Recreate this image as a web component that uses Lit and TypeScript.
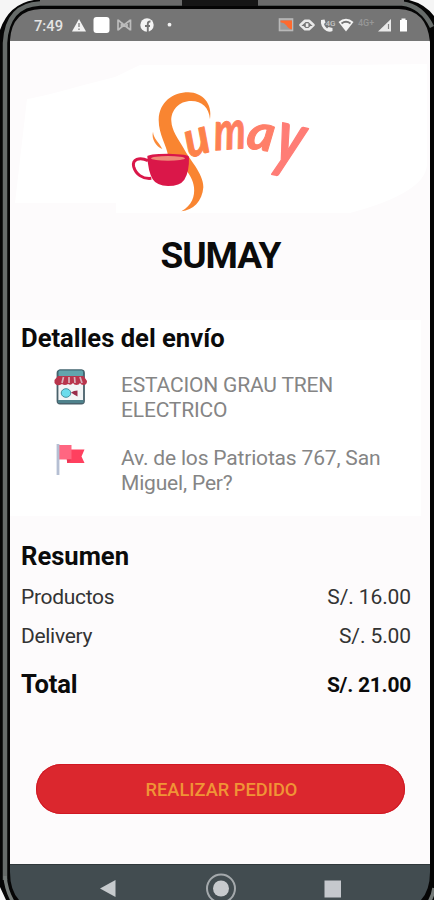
import { LitElement, html, css, svg } from "lit";
import { customElement } from "lit/decorators.js";

@customElement("status-bar")
class StatusBar extends LitElement {
  static styles = css`
    :host { display: block; height: 41px; background: #757575; }
    svg { display: block; width: 434px; height: 41px; }
    .time { font: 500 15px Roboto, sans-serif; fill: #e4e4e4; }
    .tiny { font: 500 8px Roboto, sans-serif; fill: #c4c4c4; }
    .faint { font: 500 9px Roboto, sans-serif; fill: #979797; }
  `;
  render() {
    return html`<svg viewBox="0 0 434 41">
      <text class="time" x="34" y="30.5" textLength="29" lengthAdjust="spacingAndGlyphs">7:49</text>
      <path d="M79 19 L86 31.5 H72Z" fill="#f2f2f2" />
      <path d="M79 23 V27 M79 28.5 V30" stroke="#858585" stroke-width="1.4" />
      <rect x="93.500" y="17" width="16" height="16" rx="3" fill="#fff" />
      <path d="M118 19.500 V30.500 M130.500 19.500 V30.500 M118 20 L124 25 L130.500 20 M118 30 L124 25 L130.500 30 M121.500 22 V28 M127 22 V28" fill="none" stroke="#bdbdbd" stroke-width="1.700" />
      <circle cx="147" cy="25" r="6.700" fill="#f4f4f4" />
      <path d="M147.800 32 V24 Q147.800 21.300 150.500 21.500 M145 26 H150" fill="none" stroke="#757575" stroke-width="1.900" />
      <circle cx="169.500" cy="24.700" r="1.900" fill="#f2f2f2" />
      <rect x="279.500" y="19" width="13" height="11.500" fill="#9a9a9a" stroke="#b9b9b9" stroke-width="1.600" />
      <path d="M280.500 20.500 H292 V29.500 Q288.500 29 286.500 25.500 Q284.500 22.800 280.500 22.300Z" fill="#ff6a2e" />
      <path d="M300.500 25 L305 20.800 H309 L313.500 25 L309 29.200 H305Z" fill="none" stroke="#e9e9e9" stroke-width="2.600" stroke-linejoin="round" />
      <rect x="305.800" y="23.300" width="2.600" height="3.600" fill="#efefef" />
      <path d="M321 20 Q320 27 326.500 31 Q330 32.500 332.500 31 V28 L328.500 27 L327 28.500 Q324.500 26.500 324 24 L325.500 22.500 L324.500 19.500Z" fill="#eee" />
      <text class="tiny" x="325.500" y="25.500">4G</text>
      <path d="M338.500 22 Q346 15.500 353.500 22 L346 31.500Z" fill="#f4f4f4" />
      <path d="M341.500 23.400 Q346 20.200 350.500 23.400" fill="none" stroke="#757575" stroke-width="1.900" />
      <text class="faint" x="358" y="25.500">4G+</text>
      <path d="M391 19 V31.500 H378Z" fill="#e9e9e9" />
      <path d="M388.500 24 V29" stroke="#858585" stroke-width="1.200" />
      <path d="M400 20 H401.500 V18.500 H405.500 V20 H407 V31.500 H400Z" fill="#fff" />
    </svg>`;
  }
}

@customElement("sumay-logo")
class SumayLogo extends LitElement {
  static styles = css`
    :host { display: block; width: 200px; height: 140px; }
    svg { display: block; width: 200px; height: 140px; overflow: visible; }
    .script {
      font: italic 700 150px Lato, sans-serif;
      stroke-linejoin: round;
      stroke-width: 3;
    }
  `;
  render() {
    const letters = [
      { c: "u", x: 208, y: 234, r: -17, w: 0.92, h: 1 },
      { c: "m", x: 285, y: 211, r: -4, w: 0.8, h: 1.08 },
      { c: "a", x: 376, y: 203, r: 9, w: 1.05, h: 1 },
      { c: "y", x: 456, y: 243, r: 13, w: 1.1, h: 1.55 },
    ];
    return html`<svg viewBox="0 0 600 420">
      <defs>
        <linearGradient id="warm" gradientUnits="userSpaceOnUse" x1="0" y1="0" x2="90" y2="0">
          <stop offset="0" stop-color="#fe7f50" /><stop offset="1" stop-color="#fe7f62" />
        </linearGradient>
      </defs>
      <path d="M270 118 C267 82 246 63 214 63 C176 63 153 91 154 123 C155 151 174 176 190 203 C202 226 214 240 226 259 C240 282 250 300 250 322 C247 364 219 391 184 394 C216 376 225 350 222 322 C220 300 208 284 200 272 L144 226 C140 196 116 164 116 119 C118 66 158 37 205 37 C248 38 278 71 270 118Z" fill="#f98531" />
      <path d="M99 155 C100 176 119 189 127 207 C109 200 93 177 99 155Z" fill="#fb8b39" />
      ${letters.map((l, i) => {
        const fill = ["#fd824a", "url(#warm)", "#ff7f69", "#ff7d76"][i];
        return svg`<text class="script" transform="translate(${l.x} ${l.y}) rotate(${l.r}) scale(${l.w} ${l.h})" fill=${fill} stroke=${fill}>${l.c}</text>`;
      })}
      <path d="M84 242 C57 229 36 239 41 260 C47 282 67 298 94 295" fill="none" stroke="#da1749" stroke-width="9" />
      <path d="M82 229 Q82 222 144 221 Q207 222 207 231 Q208 277 193 299 Q180 318 144 318 Q110 317 98 298 Q84 274 82 229Z" fill="#da1749" />
      <ellipse cx="144" cy="235" rx="51" ry="7" fill="#ef8b78" />
    </svg>`;
  }
}

@customElement("app-root")
class AppRoot extends LitElement {
  static styles = css`
    :host { display: block; width: 434px; height: 900px; overflow: hidden; position: relative; background: #fdfbfc; font-family: Roboto, sans-serif; color: #0b0b0b; }
    .screen { display: flex; flex-direction: column; height: 900px; }
    .hero { height: 279px; display: flex; flex-direction: column; align-items: center; position: relative; }
    .glow { position: absolute; left: 0; top: 0; width: 434px; height: 180px; }
    sumay-logo { margin-top: 39px; margin-right: -6px; position: relative; }
    h1, h2 { margin: 0; white-space: nowrap; }
    h1 { font-size: 37px; line-height: 44px; font-weight: 700; letter-spacing: -1.1px; margin: 14px 0 0 7px; }
    h2 { font-size: 25.600px; line-height: 30px; font-weight: 700; }
    .shipping { background: #fff; margin: 0 13px 0 10px; height: 196px; padding: 3px 0 0 11px; box-sizing: border-box; }
    .stop { display: flex; align-items: flex-start; color: #858585; font-size: 21px; line-height: 25px; }
    .stop svg { width: 36px; height: 38px; margin-left: 32px; margin-right: 32px; flex: none; }
    .stop p { margin: 5px 0 0; white-space: pre-line; letter-spacing: -0.180px; }
    .first { margin-top: 15px; height: 73px; }
    .summary { padding: 25px 23px 0 21px; }
    .row { display: flex; justify-content: space-between; align-items: center; font-size: 21px; line-height: 24px; color: #333; margin-top: 15px; letter-spacing: -0.300px; }
    .row span:last-child { letter-spacing: -0.100px; }
    .products { margin-top: 14px; }
    .total { color: #0b0b0b; font-weight: 700; margin-top: 19px; line-height: 30px; }
    .total h2 { letter-spacing: -0.200px; }
    .row.total span { padding-top: 3px; letter-spacing: -0.250px; }
    .action { margin: 64px 29px 0 36px; height: 50px; padding: 0 0 0 2px; border: 0; border-radius: 25px; background: #db272e; box-shadow: inset 0 0 0 1px #d01823; color: #f09436; font: 500 18.300px Roboto, sans-serif; }
    .nav { margin-top: auto; height: 36px; background: #424c50; border-top: 1px solid #30383b; box-sizing: border-box; }
    .nav svg { display: block; width: 434px; height: 35px; }
    .frame { position: absolute; left: 0; top: 0; width: 434px; height: 900px; pointer-events: none; }
  `;
  render() {
    return html`
      <div class="screen">
        <status-bar></status-bar>
        <section class="hero">
          <svg class="glow" viewBox="0 0 434 180">
            <path d="M27 58 Q45 55 80 45 L115 36 L140 24 H345 L427 23 V124 Q425 152 350 172 H116 V162 H15Z" fill="#fff" />
          </svg>
          <sumay-logo></sumay-logo>
          <h1>SUMAY</h1>
        </section>
        <section class="shipping">
          <h2>Detalles del envío</h2>
          <div class="stop first">
            <svg viewBox="0 0 36 38">
              <rect x="4.500" y="2.500" width="26.500" height="33" rx="2.500" fill="#f3f5f6" stroke="#49616b" stroke-width="1.800" />
              <rect x="5" y="2" width="25.500" height="7" rx="2" fill="#62a5ad" stroke="#3f6773" />
              <path d="M5 8 H30.500 L34 13 Q34 17 30.500 17 Q28 17 27 15 Q26 17 23.500 17 Q21 17 20 15 Q18 18 15 16 Q12 18 9 16 Q4 19 1.500 15 V12Z" fill="#b9354c" />
              <path d="M10.500 9 L9 15 M16 9 V15 M21.500 9 L22 15 M27 9 L29 15" stroke="#d8b1ba" stroke-width="1.700" />
              <path d="M5 33.500 H30.500" stroke="#4f828c" stroke-width="3" />
              <ellipse cx="13" cy="25" rx="4.800" ry="4.300" fill="#6bdcec" stroke="#438f9e" />
              <path d="M18 24.500 L21 23 L24.500 22.500 V28.500 L21 26.500Z" fill="#992c4a" />
            </svg>
            <p>ESTACION GRAU TREN
              ELECTRICO</p>
          </div>
          <div class="stop">
            <svg viewBox="0 0 36 38">
              <path d="M14 8.500 H31.500 L28.500 15.500 L31.500 22 H14Z" fill="#ff405f" />
              <path d="M6 4 H18.500 V18.500 H6Z" fill="#ff6681" />
              <path d="M13.500 18.500 H18.500 L15 22Z" fill="#e93855" />
              <path d="M5 3 V34" stroke="#b5bfd3" stroke-width="2.800" />
            </svg>
            <p>Av. de los Patriotas 767, San
              Miguel, Per?</p>
          </div>
        </section>
        <section class="summary">
          <h2>Resumen</h2>
          <div class="row products"><span>Productos</span><span>S/. 16.00</span></div>
          <div class="row"><span>Delivery</span><span>S/. 5.00</span></div>
          <div class="row total"><h2>Total</h2><span>S/. 21.00</span></div>
        </section>
        <button class="action">REALIZAR PEDIDO</button>
        <nav class="nav">
          <svg viewBox="0 0 434 35">
            <path d="M100 23.500 L115.500 15 V32Z" fill="#c6cacd" />
            <circle cx="221" cy="23.500" r="14" fill="none" stroke="#a4a9ac" stroke-width="2" />
            <circle cx="221" cy="23.500" r="8" fill="#c7cacd" />
            <rect x="324.500" y="15.500" width="16.500" height="17" fill="#c5c8cd" />
          </svg>
        </nav>
      </div>
      <svg class="frame" viewBox="0 0 434 900">
        <path fill="#050505" fill-rule="evenodd" d="M0 0 H434 V900 H0Z M10 40 Q12 10 41 9 H399 Q427 10 430 42 V872 Q430 890 421 900 H19 Q10 890 10 872Z" />
        <path d="M5 880 V43 Q7 5 40 3.500 H402 Q422 6 432 27" fill="none" stroke="#666b69" stroke-width="4.500" />
        <path d="M40 2.500 H404" stroke="#6b6b6b" stroke-width="5" />
        <path d="M5 876 Q6 890 13 902" fill="none" stroke="#747a78" stroke-width="3.500" />
        <path d="M429 902 Q433 896 434 888" fill="none" stroke="#747a78" stroke-width="3.500" />
        <path d="M182 0 H258 V6 H182Z" fill="#161616" />
        <path d="M0 0 H34 Q9 4 0 30Z M434 0 H409 Q425 4 434 16Z M0 887 L6 900 H0Z" fill="#f5f5f5" />
      </svg>
    `;
  }
}
